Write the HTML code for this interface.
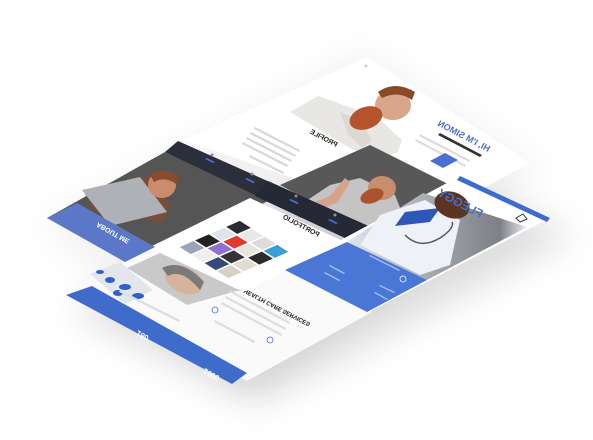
<!DOCTYPE html>
<html><head><meta charset="utf-8"><style>
html,body{margin:0;padding:0;background:#fff;width:593px;height:440px;overflow:hidden}
svg{display:block}
text{font-family:"Liberation Sans",sans-serif}
</style></head><body>
<svg width="593" height="440" viewBox="0 0 593 440" xmlns="http://www.w3.org/2000/svg">
<defs>
<filter id="bl" x="-30%" y="-30%" width="160%" height="160%"><feGaussianBlur stdDeviation="18"/></filter>
<linearGradient id="docfade" x1="0" y1="0" x2="1" y2="0"><stop offset="0" stop-color="#dfe6f0"/><stop offset="0.55" stop-color="#9a9ea5"/><stop offset="0.85" stop-color="#7d8086"/><stop offset="1" stop-color="#eceef1"/></linearGradient>
</defs>
<!-- shadow -->
<polygon points="70,310 255,405 575,235 385,150" fill="#000" opacity="0.13" filter="url(#bl)"/>
<polygon points="40,225 365,50 545,170 250,390" fill="#000" opacity="0.05" filter="url(#bl)"/>

<!-- Simon white sheet -->
<polygon points="367,57 530,163 420,222 183,140" fill="#fff"/>
<circle cx="366" cy="66" r="1.5" fill="#ccc"/>
<polygon points="290,112 318,96 352,108 378,118 402,140 398,152 376,160 350,148" fill="#e9e7e4"/>
<polygon points="340,112 360,120 372,140 362,148 348,134" fill="#dcd8d3"/>
<ellipse cx="393" cy="105" rx="18" ry="15" fill="#d8a78b"/>
<path d="M378,92 Q395,80 415,92 L412,100 Q398,90 382,98 Z" fill="#8b4a27"/>
<ellipse cx="366" cy="118" rx="17" ry="11" fill="#b4542c" transform="rotate(-20 366 118)"/>
<text transform="matrix(-0.88 -0.46 -0.5 0.86 488 152)" font-size="9" font-weight="bold" fill="#4a6fd0">HI, I'M SIMON</text>
<polygon points="482,155 440,133 438,135 480,157" fill="#333"/>
<g fill="#ddd"><polygon points="470,160 420,134 419,136 469,162"/><polygon points="466,165 416,139 415,141 465,167"/></g>
<polygon points="458,160 445,153 430,161 443,168" fill="#4a6fd0"/>
<text transform="matrix(-0.88 -0.46 -0.5 0.86 336 147)" font-size="7" font-weight="bold" fill="#222">PROFILE</text>
<g fill="#d8d8d8">
<polygon points="300,150 255,127 254,129 299,152"/><polygon points="296,155 251,132 250,134 295,157"/>
<polygon points="292,160 247,137 246,139 291,162"/><polygon points="288,165 243,142 242,144 287,167"/>
<polygon points="284,172 250,155 249,157 283,174"/></g>

<!-- about-me gray photo -->
<polygon points="165,152 270,200 140,265 47,218" fill="#555"/>
<polygon points="83,190 150,176 170,205 163,222 95,212" fill="#7a4d37"/>
<polygon points="82,190 140,177 167,212 110,226" fill="#aeb1b5"/>
<ellipse cx="162" cy="185" rx="14" ry="13" fill="#c98d6e"/>
<path d="M150,175 Q165,165 180,178 L176,184 Q165,176 154,182 Z" fill="#8a4b2a"/>
<!-- thumbs photo -->
<polygon points="280,185 370,145 470,195 372,235" fill="#585858"/>
<polygon points="300,205 330,185 360,178 395,195 405,220 378,232 330,215" fill="#c4c4c4"/>
<ellipse cx="382" cy="188" rx="14" ry="12" fill="#c98c6c"/>
<ellipse cx="372" cy="196" rx="12" ry="7" fill="#a9532f" transform="rotate(-20 372 196)"/>
<path d="M290,212 L330,196 L345,178 L350,182 L338,202 L300,218 Z" fill="#d6a38a"/>
<!-- navy band -->
<polygon points="178,141 375,229 362,246 165,152" fill="#2b2f3c"/>
<polygon points="268,181 375,229 362,246 255,196" fill="#252936"/>
<g fill="#4a6fd0">
<polygon points="207,158 215,162 213,163 205,159"/><polygon points="247,178 255,182 253,183 245,179"/>
<polygon points="291,199 299,203 297,204 289,200"/><polygon points="330,219 338,223 336,224 328,220"/></g>
<g fill="#8a8f9c"><circle cx="212" cy="155" r="1.5"/><circle cx="252" cy="174" r="1.5"/><circle cx="296" cy="196" r="1.5"/><circle cx="335" cy="215" r="1.5"/></g>

<!-- health sheet -->
<polygon points="66,292 225,210 372,312 247,381" fill="#fafafa"/>
<polygon points="160,253 240,290 187,305 127,268" fill="#c9c9c9"/>
<ellipse cx="184" cy="280" rx="20" ry="13" fill="#d8b39c" transform="rotate(25 184 280)"/>
<path d="M162,268 Q182,258 204,282 L200,290 Q182,268 168,276 Z" fill="#7a7a7a"/>
<polygon points="90,274 120,262 153,290 125,304" fill="#e3e6ec"/>
<g fill="#2f5ed0"><ellipse cx="110" cy="280" rx="5" ry="3"/><ellipse cx="125" cy="287" rx="6" ry="3"/><ellipse cx="138" cy="296" rx="6" ry="3"/><ellipse cx="118" cy="293" rx="5" ry="3"/><ellipse cx="100" cy="272" rx="4" ry="2"/></g>
<text transform="matrix(0.88 0.46 0.5 -0.86 232 282)" font-size="6" font-weight="bold" fill="#222">OUR HEALTH CARE SERVICES</text>
<g fill="#ddd"><polygon points="230,290 290,322 289,324 229,292"/><polygon points="226,296 286,328 285,330 225,298"/><polygon points="222,302 282,334 281,336 221,304"/><polygon points="215,320 255,341 254,343 214,322"/><polygon points="150,305 180,320 179,322 149,307"/><polygon points="120,290 150,305 149,307 119,292"/></g>
<circle cx="215" cy="310" r="3" fill="none" stroke="#4a6fd0" stroke-width="0.8"/>
<circle cx="270" cy="340" r="3" fill="none" stroke="#4a6fd0" stroke-width="0.8"/>
<polygon points="92,286 247,373 232,384 66,295" fill="#3f6bcb"/>
<text transform="matrix(0.86 0.48 0.5 -0.86 205 368)" font-size="8" font-weight="bold" font-style="italic" fill="#fff">1600</text>
<text transform="matrix(0.86 0.48 0.5 -0.86 138 330)" font-size="8" font-weight="bold" font-style="italic" fill="#fff">160</text>

<!-- portfolio sheet -->
<polygon points="250,198 345,242 243,292 150,247" fill="#fff"/>
<text transform="matrix(-0.88 -0.46 -0.5 0.86 318 237)" font-size="7" font-weight="bold" fill="#222">PORTFOLIO</text>
<g transform="matrix(12.5 8 -15.5 6.75 240 220)">
<rect x="0.06" y="0.06" width="0.88" height="0.88" fill="#2a2b30"/>
<rect x="1.06" y="0.06" width="0.88" height="0.88" fill="#e8e8e8"/>
<rect x="2.06" y="0.06" width="0.88" height="0.88" fill="#dcdcdc"/>
<rect x="3.06" y="0.06" width="0.88" height="0.88" fill="#3a9ed8"/>
<rect x="0.06" y="1.06" width="0.88" height="0.88" fill="#dfe3ea"/>
<rect x="1.06" y="1.06" width="0.88" height="0.88" fill="#e23a2e"/>
<rect x="2.06" y="1.06" width="0.88" height="0.88" fill="#e9e4df"/>
<rect x="3.06" y="1.06" width="0.88" height="0.88" fill="#2b2b2b"/>
<rect x="0.06" y="2.06" width="0.88" height="0.88" fill="#222"/>
<rect x="1.06" y="2.06" width="0.88" height="0.88" fill="#8f6fd1"/>
<rect x="2.06" y="2.06" width="0.88" height="0.88" fill="#333"/>
<rect x="3.06" y="2.06" width="0.88" height="0.88" fill="#e1dcd4"/>
<rect x="0.06" y="3.06" width="0.88" height="0.88" fill="#9aa5b8"/>
<rect x="1.06" y="3.06" width="0.88" height="0.88" fill="#eee"/>
<rect x="2.06" y="3.06" width="0.88" height="0.88" fill="#364a7a"/>
<rect x="3.06" y="3.06" width="0.88" height="0.88" fill="#d8d0c2"/>
</g>

<!-- doctor sheet -->
<polygon points="460,176 550,218 367,313 285,270" fill="#fff"/>
<polygon points="460,176 550,218 547,222 457,180" fill="#3f6bcb"/>
<polygon points="423,193 527,227 427,280 347,242" fill="url(#docfade)"/>
<polygon points="380,215 425,200 460,220 450,265 420,275 360,245" fill="#eef1f7"/>
<polygon points="405,212 440,208 430,222 395,226" fill="#2f57b8"/>
<ellipse cx="452" cy="205" rx="18" ry="13" fill="#5a3522" transform="rotate(20 452 205)"/>
<path d="M405,235 Q420,250 440,238 Q455,228 452,222" fill="none" stroke="#555" stroke-width="1.5"/>
<text transform="matrix(-0.88 -0.46 -0.5 0.86 480 218)" font-size="12" font-weight="bold" fill="#4a6fd0">FLEGGY</text>
<polygon points="516,218 523,214 527,219 520,222" fill="none" stroke="#333" stroke-width="1"/>
<polygon points="285,270 347,242 427,280 367,312" fill="#4a76d6"/>
<g fill="#a9bff0"><polygon points="370,255 400,270 399,271 369,256"/><polygon points="330,265 345,273 344,274 329,266"/><polygon points="325,272 340,280 339,281 324,273"/><polygon points="380,285 395,292 394,293 379,286"/><polygon points="375,292 388,299 387,300 374,293"/></g>
<circle cx="403" cy="279" r="3" fill="none" stroke="#fff" stroke-width="0.8"/>

<polygon points="47,218 77,203 155,247 125,262" fill="#5b78c8"/>
<text transform="matrix(0.86 0.48 0.5 -0.86 98 222)" font-size="7" font-weight="bold" fill="#fff">ABOUT ME</text>
</svg>
</body></html>
